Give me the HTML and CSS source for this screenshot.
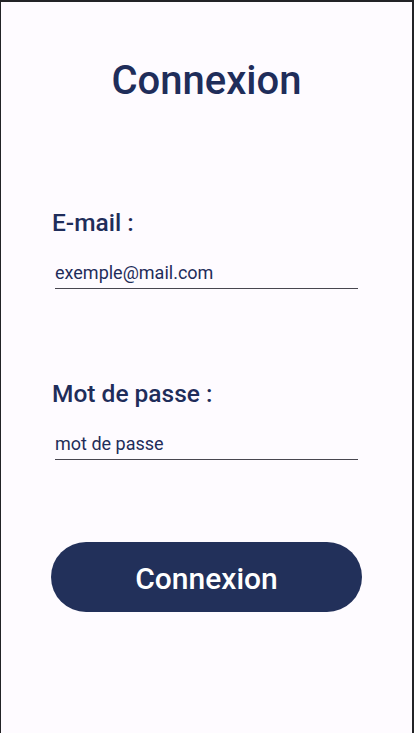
FILE: index.html
```html
<!DOCTYPE html>
<html lang="fr">
<head>
<meta charset="utf-8">
<title>Connexion</title>
<link rel="stylesheet" href="styles.css">
</head>
<body>
<div class="screen">
  <h1 class="title">Connexion</h1>
  <div class="field field-email">
    <label class="label">E-mail :</label>
    <div class="input">exemple@mail.com</div>
  </div>
  <div class="field field-pass">
    <label class="label">Mot de passe :</label>
    <div class="input">mot de passe</div>
  </div>
  <button class="btn">Connexion</button>
</div>
</body>
</html>
```

FILE: styles.css
```css
html, body {
  margin: 0;
  padding: 0;
  height: 100%;
}
body {
  background: #222326;
  font-family: Roboto, "Noto Sans", sans-serif;
}
.screen {
  box-sizing: border-box;
  height: 733px;
  margin: 2px 2px 0 1px;
  background: #fefbff;
  display: flex;
  flex-direction: column;
  padding: 0 0 0 50px;
}
.title {
  margin: 55px 0 0 -50px;
  text-align: center;
  font-size: 40px;
  font-weight: 500;
  line-height: 48px;
  color: #1f2d5a;
}
.field {
  display: flex;
  flex-direction: column;
}
.field-email {
  margin-top: 104px;
}
.field-pass {
  margin-top: 91px;
}
.label {
  font-size: 24.5px;
  font-weight: 500;
  color: #1f2d5a;
  line-height: 28px;
  padding-left: 1px;
}
.input {
  margin: 24px 0 0 4px;
  width: 303px;
  font-size: 18px;
  line-height: 24px;
  color: #1f2d5a;
  padding-bottom: 3px;
  border-bottom: 1px solid #48464f;
}
.btn {
  margin-top: 82px;
  width: 311px;
  height: 70px;
  border: none;
  border-radius: 35px;
  background: #22305a;
  color: #ffffff;
  font-family: Roboto, "Noto Sans", sans-serif;
  font-size: 30px;
  font-weight: 500;
  padding: 2px 0 0 0;
}
```
